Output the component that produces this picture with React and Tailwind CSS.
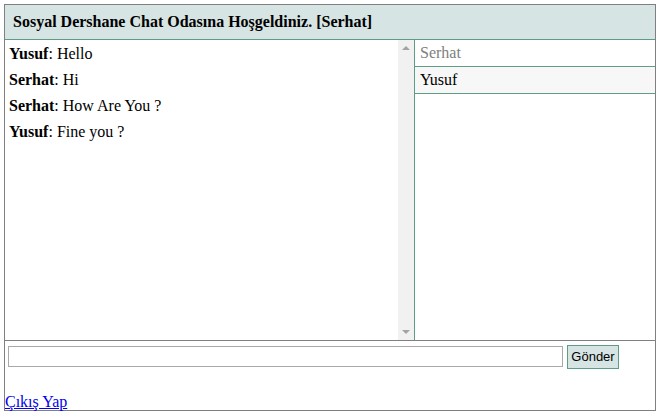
import React from 'react'

const messages = [
  { user: 'Yusuf', text: 'Hello' },
  { user: 'Serhat', text: 'Hi' },
  { user: 'Serhat', text: 'How Are You ?' },
  { user: 'Yusuf', text: 'Fine you ?' },
]

function App() {
  return (
    <div className="min-h-screen bg-white pt-[4px] pl-[4px] font-['Liberation_Serif',serif] text-black">
      <div className="w-[652px] border border-[#808080]">
        <div className="flex h-[35px] items-center border-b border-[#5f9b85] bg-[#d6e4e3] pl-[8px] text-[16px] font-bold">
          Sosyal Dershane Chat Odasına Hoşgeldiniz. [Serhat]
        </div>
        <div className="flex h-[301px] border-b border-[#808080]">
          <div className="w-[393px] pl-[4px] pt-[1px] text-[16px]">
            {messages.map((m, i) => (
              <div key={i} className="h-[26px] leading-[26px]">
                <b>{m.user}</b>: {m.text}
              </div>
            ))}
          </div>
          <div className="flex w-[16px] flex-col items-center justify-between bg-[#f1f1f1] py-[6px]">
            <div className="h-0 w-0 border-x-[4px] border-b-[4px] border-x-transparent border-b-[#a3a3a3]" />
            <div className="h-0 w-0 border-x-[4px] border-t-[4px] border-x-transparent border-t-[#a3a3a3]" />
          </div>
          <div className="flex-1 border-l border-[#5f9b85] text-[16px]">
            <div className="h-[27px] border-b border-[#5f9b85] pl-[5px] leading-[26px] text-[#808080]">Serhat</div>
            <div className="h-[27px] border-b border-[#5f9b85] bg-[#f7f7f7] pl-[5px] leading-[26px]">Yusuf</div>
          </div>
        </div>
        <div className="flex h-[31px] items-center gap-[4px] pl-[3px]">
          <input
            type="text"
            className="h-[21px] w-[555px] border border-[#a9a9a9] bg-white outline-none"
          />
          <button
            type="button"
            className="h-[24px] w-[52px] border border-[#5f9b85] bg-[#d6e4e3] font-['Liberation_Sans',sans-serif] text-[13px] text-black"
          >
            Gönder
          </button>
        </div>
        <div className="h-[38px] flex items-end">
          <a href="#" className="text-[16px] leading-[17px] text-[#0000ee] underline">
            Çıkış Yap
          </a>
        </div>
      </div>
    </div>
  )
}

export default App
